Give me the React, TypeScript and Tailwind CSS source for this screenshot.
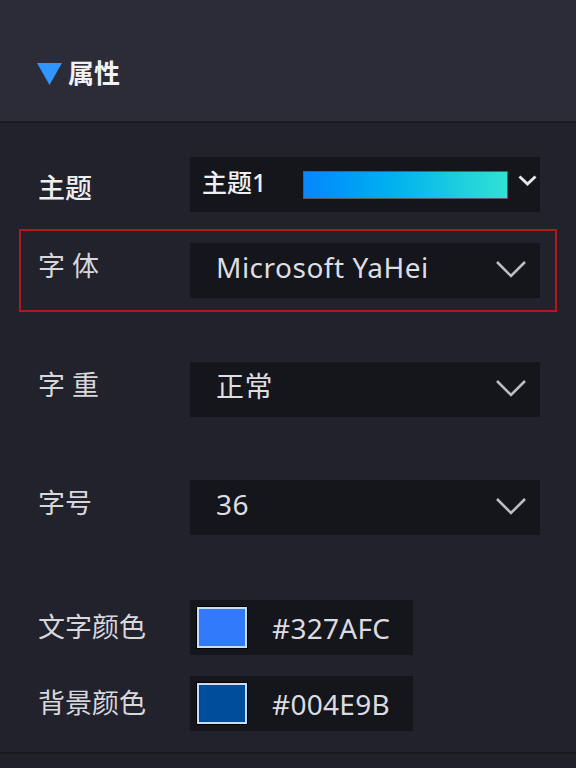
const font = "font-['Noto_Sans','Noto_Sans_CJK_SC',sans-serif]"

function Chevron({ small }: { small?: boolean }) {
	if (small) {
		return (
			<svg width="21" height="13" viewBox="0 0 21 13" className="shrink-0">
				<path d="M2.5 2.5 L10.5 10 L18.5 2.5" fill="none" stroke="#e6e6e6" strokeWidth="3" />
			</svg>
		)
	}
	return (
		<svg width="32" height="18" viewBox="0 0 32 18" className="mb-1 shrink-0">
			<path d="M2 2 L16 16 L30 2" fill="none" stroke="#bdbdc2" strokeWidth="2.6" />
		</svg>
	)
}

function Row({
	label,
	children,
	highlight,
	className,
	labelClass,
}: {
	label: string
	children: React.ReactNode
	highlight?: boolean
	className?: string
	labelClass?: string
}) {
	return (
		<div
			className={`flex items-center border-2 py-3 pl-[17px] pr-[15px] ${
				highlight ? "border-[#b3191c]" : "border-transparent"
			} ${className ?? ""}`}
		>
			<div
				className={`w-[152px] text-[27px] whitespace-pre ${
					labelClass ?? "pb-2 text-[#d8d8dc]"
				}`}
			>
				{label}
			</div>
			{children}
		</div>
	)
}

function Select({ value }: { value: string }) {
	return (
		<div className="flex h-[55px] flex-1 items-center justify-between bg-[#15151c] pl-[26px] pr-[13px]">
			<span className="pb-2 text-[28px] tracking-[0.5px] text-[#dedee2]">{value}</span>
			<Chevron />
		</div>
	)
}

function ColorField({ swatch, hex }: { swatch: string; hex: string }) {
	return (
		<div className="flex h-[55px] w-[223px] items-center bg-[#15151c] pl-[6px]">
			<div className="border border-black">
				<div className={`h-[41px] w-[50px] border-2 border-[#c9dcff] ${swatch}`} />
			</div>
			<span className="ml-[24px] text-[28px] tracking-[0.3px] text-[#dcdce0]">{hex}</span>
		</div>
	)
}

export default function App() {
	return (
		<div className={`h-[768px] w-[576px] overflow-hidden bg-[#22222c] ${font}`}>
			<div className="flex h-[123px] items-center border-b-2 border-[#1a1a21] bg-[#2b2c38] pt-[26px] pl-[37px]">
				<svg width="25" height="22" viewBox="0 0 25 22" className="mr-[6px]">
					<path d="M0 0 H25 L12.5 22 Z" fill="#2f95ff" />
				</svg>
				<span className="text-[26px] font-bold text-[#f2f2f4]">属性</span>
			</div>

			<div className="px-[19px]">
				<Row label="主题" className="mt-[20px]" labelClass="pt-2 font-medium text-[#eeeef0]">
					<div className="flex h-[55px] flex-1 items-center bg-[#15151c] pl-[12px] pr-[1px]">
						<span className="w-[101px] pb-1 text-[25px] font-medium text-[#f0f0f2]">主题1</span>
						<div className="h-[28px] w-[205px] border border-[#5a5a66] bg-linear-to-r from-[#0a86ff] to-[#30e2d2]" />
						<div className="ml-auto pr-[1px] pb-2">
							<Chevron small />
						</div>
					</div>
				</Row>
				<Row label="字 体" highlight className="mt-[3px]">
					<Select value="Microsoft YaHei" />
				</Row>
				<Row label="字 重" className="mt-[36px]">
					<Select value="正常" />
				</Row>
				<Row label="字号" className="mt-[35px]">
					<Select value="36" />
				</Row>
				<div className="mt-[51px] flex flex-col gap-[21px] pl-[19px]">
					<div className="flex items-center">
						<div className="w-[152px] text-[27px] text-[#d8d8dc]">文字颜色</div>
						<ColorField swatch="bg-[#327afc]" hex="#327AFC" />
					</div>
					<div className="flex items-center">
						<div className="w-[152px] text-[27px] text-[#d8d8dc]">背景颜色</div>
						<ColorField swatch="bg-[#004e9b]" hex="#004E9B" />
					</div>
				</div>
			</div>
			<div className="mt-[21px] h-[2px] bg-[#18181e]" />
			<div className="h-[20px] bg-[#202029]" />
		</div>
	)
}
